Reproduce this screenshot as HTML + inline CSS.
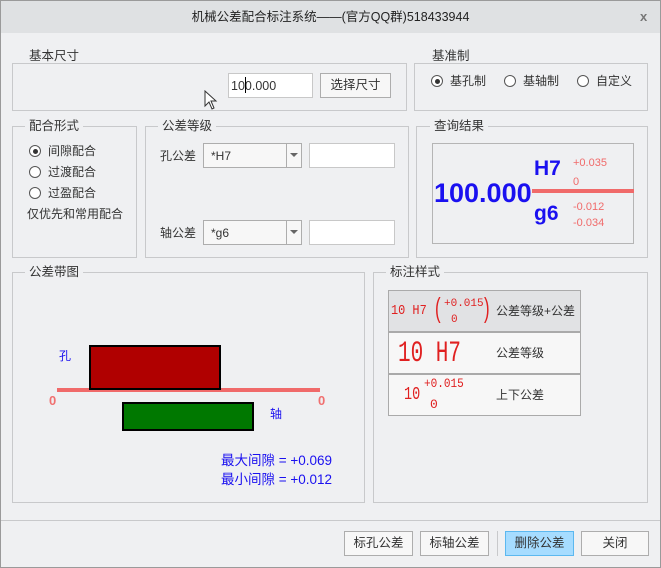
<!DOCTYPE html>
<html><head><meta charset="utf-8"><style>
*{box-sizing:border-box;margin:0;padding:0}
body{width:661px;height:568px;background:#eff0f2;font-family:"Liberation Sans","Noto Sans CJK SC",sans-serif;font-size:12px;color:#333;position:relative;overflow:hidden}
.a{position:absolute}
.win{position:absolute;left:0;top:0;width:661px;height:568px;border:1px solid #9a9a9a}
.title{position:absolute;left:1px;top:1px;width:659px;height:32px;background:#dfe1e3;text-align:center;line-height:32px;font-size:12.5px;color:#222}
.gb{position:absolute;border:1px solid #c8c9cb}
.gl{position:absolute;background:#eff0f2;padding:0 4px;font-size:12.5px;color:#333;line-height:14px}
.rad{position:absolute;width:12px;height:12px;border:1px solid #555;border-radius:50%;background:#fff}
.rad.on::after{content:"";position:absolute;left:2.5px;top:2.5px;width:5px;height:5px;border-radius:50%;background:#333}
.tb{position:absolute;background:#fff;border:1px solid #c8c8c8}
.btn{position:absolute;background:#f7f7f7;border:1px solid #adadad;text-align:center;font-size:12.5px;line-height:22px;color:#333}
.t{position:absolute;white-space:nowrap;line-height:14px}
</style></head><body>
<div class="win"></div>
<div class="title">机械公差配合标注系统——(官方QQ群)518433944</div>
<div class="t" style="left:640px;top:10px;font-size:13px;font-weight:bold;color:#777">x</div>

<div class="gb" style="left:12px;top:63px;width:395px;height:48px"></div>
<div class="gl" style="left:25px;top:49px">基本尺寸</div>
<div class="tb" style="left:228px;top:73px;width:85px;height:25px"></div>
<div class="t" style="left:231px;top:79px;font-size:12.5px">100.000</div>
<div class="a" style="left:245px;top:77px;width:1px;height:16px;background:#000"></div>
<div class="btn" style="left:320px;top:73px;width:71px;height:25px">选择尺寸</div>
<svg class="a" style="left:204px;top:90px" width="14" height="20"><path d="M1 1 L1 16 L5 12 L8 19 L10 18 L7 11 L12 11 Z" fill="#fff" stroke="#333" stroke-width="1"/></svg>

<div class="gb" style="left:414px;top:63px;width:234px;height:48px"></div>
<div class="gl" style="left:428px;top:49px">基准制</div>
<div class="rad on" style="left:431px;top:75px"></div><div class="t" style="left:450px;top:74px">基孔制</div>
<div class="rad" style="left:504px;top:75px"></div><div class="t" style="left:523px;top:74px">基轴制</div>
<div class="rad" style="left:577px;top:75px"></div><div class="t" style="left:596px;top:74px">自定义</div>

<div class="gb" style="left:12px;top:126px;width:125px;height:132px"></div>
<div class="gl" style="left:25px;top:119px">配合形式</div>
<div class="rad on" style="left:29px;top:145px"></div><div class="t" style="left:48px;top:144px">间隙配合</div>
<div class="rad" style="left:29px;top:166px"></div><div class="t" style="left:48px;top:165px">过渡配合</div>
<div class="rad" style="left:29px;top:187px"></div><div class="t" style="left:48px;top:186px">过盈配合</div>
<div class="t" style="left:27px;top:207px">仅优先和常用配合</div>

<div class="gb" style="left:145px;top:126px;width:264px;height:132px"></div>
<div class="gl" style="left:158px;top:119px">公差等级</div>
<div class="t" style="left:160px;top:149px">孔公差</div>
<div class="tb" style="left:203px;top:143px;width:99px;height:25px;border-color:#adadad;background:#f7f7f7"></div>
<div class="a" style="left:286px;top:144px;width:1px;height:23px;background:#adadad"></div>
<div class="a" style="left:290px;top:153px;border-left:4px solid transparent;border-right:4px solid transparent;border-top:4px solid #666"></div>
<div class="t" style="left:211px;top:149px">*H7</div>
<div class="tb" style="left:309px;top:143px;width:86px;height:25px"></div>
<div class="t" style="left:160px;top:226px">轴公差</div>
<div class="tb" style="left:203px;top:220px;width:99px;height:25px;border-color:#adadad;background:#f7f7f7"></div>
<div class="a" style="left:286px;top:221px;width:1px;height:23px;background:#adadad"></div>
<div class="a" style="left:290px;top:230px;border-left:4px solid transparent;border-right:4px solid transparent;border-top:4px solid #666"></div>
<div class="t" style="left:211px;top:226px">*g6</div>
<div class="tb" style="left:309px;top:220px;width:86px;height:25px"></div>

<div class="gb" style="left:416px;top:126px;width:232px;height:132px"></div>
<div class="gl" style="left:430px;top:119px">查询结果</div>
<div class="gb" style="left:432px;top:143px;width:202px;height:101px;border-color:#b5b5b5"></div>
<div class="t" style="left:434px;top:178px;font-size:27px;line-height:30px;font-weight:bold;color:#1a10f0">100.000</div>
<div class="a" style="left:532px;top:189px;width:102px;height:4px;background:#f06a6a"></div>
<div class="t" style="left:534px;top:157px;font-size:21px;line-height:24px;font-weight:bold;color:#1a10f0">H7</div>
<div class="t" style="left:534px;top:202px;font-size:21px;line-height:24px;font-weight:bold;color:#1a10f0">g6</div>
<div class="t" style="left:573px;top:156px;font-size:11px;color:#f06a6a">+0.035</div>
<div class="t" style="left:573px;top:175px;font-size:11px;color:#f06a6a">0</div>
<div class="t" style="left:573px;top:200px;font-size:11px;color:#f06a6a">-0.012</div>
<div class="t" style="left:573px;top:216px;font-size:11px;color:#f06a6a">-0.034</div>

<div class="gb" style="left:12px;top:272px;width:353px;height:231px"></div>
<div class="gl" style="left:25px;top:265px">公差带图</div>
<div class="t" style="left:59px;top:349px;color:#1a10f0">孔</div>
<div class="a" style="left:57px;top:388px;width:263px;height:4px;background:#f06a6a"></div>
<div class="a" style="left:89px;top:345px;width:132px;height:45px;background:#b00000;border:2px solid #000"></div>
<div class="a" style="left:122px;top:402px;width:132px;height:29px;background:#007800;border:2px solid #000"></div>
<div class="t" style="left:49px;top:394px;font-size:13px;font-weight:bold;color:#f07070">0</div>
<div class="t" style="left:318px;top:394px;font-size:13px;font-weight:bold;color:#f07070">0</div>
<div class="t" style="left:270px;top:407px;color:#1a10f0">轴</div>
<div class="t" style="left:221px;top:454px;font-size:13.5px;color:#1a10f0">最大间隙 = +0.069</div>
<div class="t" style="left:221px;top:473px;font-size:13.5px;color:#1a10f0">最小间隙 = +0.012</div>

<div class="gb" style="left:373px;top:272px;width:275px;height:231px"></div>
<div class="gl" style="left:386px;top:265px">标注样式</div>
<div class="a" style="left:388px;top:290px;width:193px;height:126px;border:1px solid #aaa;background:#f7f7f7"></div>
<div class="a" style="left:389px;top:291px;width:191px;height:40px;background:#e1e2e4"></div>
<div class="a" style="left:389px;top:331px;width:191px;height:2px;background:#aaa"></div>
<div class="a" style="left:389px;top:373px;width:191px;height:2px;background:#aaa"></div>
<div class="t" style="left:391px;top:304px;font-family:'Liberation Mono',monospace;font-size:14px;color:#e02020;transform:scaleX(.85);transform-origin:left">10 H7</div>
<div class="t" style="left:435px;top:293px;font-size:28px;line-height:30px;color:#e02020;transform:scaleX(.6);transform-origin:left">(</div>
<div class="t" style="left:444px;top:297px;font-family:'Liberation Mono',monospace;font-size:11px;color:#e02020">+0.015</div>
<div class="t" style="left:451px;top:313px;font-family:'Liberation Mono',monospace;font-size:11px;color:#e02020">0</div>
<div class="t" style="left:484px;top:293px;font-size:28px;line-height:30px;color:#e02020;transform:scaleX(.6);transform-origin:left">)</div>
<div class="t" style="left:496px;top:304px">公差等级+公差</div>
<div class="t" style="left:398px;top:337px;font-family:'Liberation Mono',monospace;font-size:30px;line-height:34px;color:#e02020;transform:scaleX(.7);transform-origin:left">10 H7</div>
<div class="t" style="left:496px;top:346px">公差等级</div>
<div class="t" style="left:404px;top:385px;font-family:'Liberation Mono',monospace;font-size:18px;line-height:20px;color:#e02020;transform:scaleX(.75);transform-origin:left">10</div>
<div class="t" style="left:424px;top:377px;font-family:'Liberation Mono',monospace;font-size:13px;color:#e02020;transform:scaleX(.85);transform-origin:left">+0.015</div>
<div class="t" style="left:430px;top:398px;font-family:'Liberation Mono',monospace;font-size:13px;color:#e02020">0</div>
<div class="t" style="left:496px;top:388px">上下公差</div>

<div class="a" style="left:1px;top:520px;width:659px;height:1px;background:#c8c9cb"></div>
<div class="btn" style="left:344px;top:531px;width:69px;height:25px">标孔公差</div>
<div class="btn" style="left:420px;top:531px;width:69px;height:25px">标轴公差</div>
<div class="a" style="left:497px;top:531px;width:1px;height:25px;background:#c8c9cb"></div>
<div class="btn" style="left:505px;top:531px;width:69px;height:25px;background:#a6dcff;border-color:#5cb8ef">删除公差</div>
<div class="btn" style="left:581px;top:531px;width:68px;height:25px">关闭</div>
</body></html>
